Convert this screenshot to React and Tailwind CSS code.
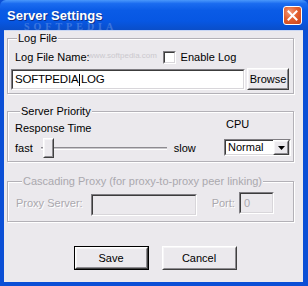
import React from 'react';

const ui = { fontFamily: '"Liberation Sans", Arial, sans-serif' };

const Sunken = ({ className = '', children }) => (
  <div className={`border border-t-[#7f7d82] border-l-[#7f7d82] border-r-white border-b-white ${className}`}>
    <div className="h-full w-full border border-t-[#3c3c3c] border-l-[#3c3c3c] border-r-[#d8d6da] border-b-[#d8d6da]">
      {children}
    </div>
  </div>
);

const Raised = ({ className = '', children }) => (
  <div className={`border border-t-white border-l-white border-r-[#404040] border-b-[#404040] ${className}`}>
    <div className="flex h-full w-full items-center justify-center border border-t-[#f6f5f7] border-l-[#f6f5f7] border-r-[#8d8b90] border-b-[#8d8b90] bg-[#ebe9ed]">
      {children}
    </div>
  </div>
);

const Group = ({ title, disabled, className = '', children }) => (
  <fieldset
    className={`ml-[3px] w-[287px] border border-[#b3b1b7] shadow-[inset_1px_1px_0_#ffffff,1px_1px_0_#ffffff] ${className}`}
  >
    <legend className={`ml-[6px] bg-[#ebe9ed] px-[1px] text-[11px] leading-[13px] ${disabled ? 'text-[#aaa8ad]' : 'text-black'}`}>
      {title}
    </legend>
    {children}
  </fieldset>
);

export default function App() {
  return (
    <div className="relative h-[286px] w-[308px] overflow-hidden bg-[#0b4fd6]" style={ui}>
      {/* title bar */}
      <div className="flex h-[30px] items-center justify-between rounded-t-[6px] bg-[linear-gradient(180deg,#4a98fb_0%,#1b6cf0_12%,#0a5be6_35%,#0757e3_70%,#0a4ec9_100%)] pl-[7px] pr-[6px]">
        <span className="text-[13px] font-bold leading-[15px] text-white [text-shadow:1px_1px_0_#0a2f8c]">Server Settings</span>
        <div className="flex h-[19px] w-[19px] items-center justify-center rounded-[3px] border border-white bg-[radial-gradient(circle_at_35%_30%,#f39a7a_0%,#e4602e_45%,#c8421a_100%)]">
          <svg width="11" height="11" viewBox="0 0 11 11">
            <path d="M1.5 1.5 L9.5 9.5 M9.5 1.5 L1.5 9.5" stroke="white" strokeWidth="2" strokeLinecap="square" />
          </svg>
        </div>
      </div>

      {/* dialog body */}
      <div className="ml-[4px] mr-[5px] h-[252px] border-t border-[#c8d6f4] bg-[#ebe9ed] pt-[1px] text-[11px] leading-[13px] text-black">
        <Group title="Log File" className="px-[3px] pb-[3px]">
          <div className="mt-[5px] flex h-[14px] items-center">
            <span className="ml-[4px]">Log File Name:</span>
            <div className="ml-[73px] flex items-center gap-[5px]">
              <Sunken className="h-[13px] w-[13px] bg-white" />
              <span>Enable Log</span>
            </div>
          </div>
          <div className="mt-[4px] flex items-end gap-[2px]">
            <Sunken className="h-[21px] w-[234px] bg-white">
              <div className="flex h-full items-center pl-[2px] text-[11.5px] tracking-[-0.2px]">
                <span>SOFTPEDIA</span>
                <span className="mx-[0.5px] inline-block h-[12px] w-[1.5px] bg-black" />
                <span>LOG</span>
              </div>
            </Sunken>
            <Raised className="h-[22px] w-[42px]">
              <span>Browse</span>
            </Raised>
          </div>
        </Group>

        <Group title="Server Priority" className="mt-[11px] px-[6px] pb-[3px]">
          <div className="flex items-start justify-between">
            <div className="mt-[4px]">
              <div className="ml-[1px]">Response Time</div>
              <div className="mt-[3px] flex items-center">
                <span className="ml-[1px]">fast</span>
                <div className="relative ml-[8px] flex h-[20px] w-[126px] items-center">
                  <div className="h-[3px] w-full border-t border-b border-t-[#8d8b90] border-b-white bg-[#c9c7cc]" />
                  <Raised className="absolute left-[2px] top-0 h-[20px] w-[11px]" />
                </div>
                <span className="ml-[7px]">slow</span>
              </div>
            </div>
            <div className="mr-[-4px] flex flex-col items-start">
              <span className="ml-[2px]">CPU</span>
              <Sunken className="mt-[8px] h-[17px] w-[67px] bg-white">
                <div className="flex h-full items-center justify-between">
                  <span className="pl-[2px]">Normal</span>
                  <Raised className="h-[15px] w-[16px]">
                    <svg width="7" height="4" viewBox="0 0 7 4">
                      <path d="M0 0 H7 L3.5 4 Z" fill="black" />
                    </svg>
                  </Raised>
                </div>
              </Sunken>
            </div>
          </div>
        </Group>

        <Group title="Cascading Proxy (for proxy-to-proxy peer linking)" disabled className="mt-[13px] px-[8px] pb-[5px]">
          <div className="mt-[4px] flex items-start text-[#aaa8ad]">
            <span className="mt-[5px] [text-shadow:1px_1px_0_#ffffff]">Proxy Server:</span>
            <Sunken className="ml-[8px] mt-[2px] h-[22px] w-[106px] bg-[#ebe9ed]" />
            <span className="ml-[15px] mt-[5px] [text-shadow:1px_1px_0_#ffffff]">Port:</span>
            <Sunken className="ml-[4px] h-[22px] w-[35px] bg-[#ebe9ed]">
              <span className="pl-[3px] leading-[18px]">0</span>
            </Sunken>
          </div>
        </Group>

        <div className="mt-[24px] flex justify-center gap-[13px] pl-[3px]">
          <div className="h-[24px] w-[75px] border border-black">
            <Raised className="h-full w-full">
              <span>Save</span>
            </Raised>
          </div>
          <Raised className="h-[24px] w-[75px]">
            <span>Cancel</span>
          </Raised>
        </div>
      </div>

      {/* softpedia watermark */}
      <div className="pointer-events-none absolute left-[24px] top-[23px] text-[10px] font-bold leading-[8px] tracking-[4px] text-white opacity-20" style={{ fontFamily: '"Liberation Serif", serif' }}>
        SOFTPEDIA
      </div>
      <div className="pointer-events-none absolute left-[88px] top-[51px] text-[8px] leading-[10px] text-[#9a98a0] opacity-40">
        www.softpedia.com
      </div>
    </div>
  );
}
